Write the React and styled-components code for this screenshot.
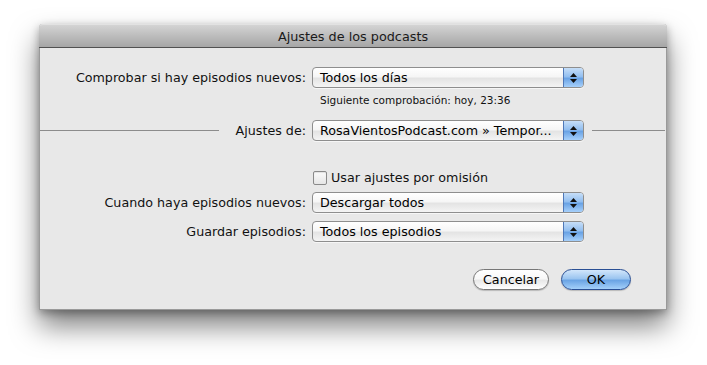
import React from "react";
import styled, { createGlobalStyle } from "styled-components";

const Global = createGlobalStyle`
  html, body { margin: 0; padding: 0; background: #ffffff; }
  body { font-family: "DejaVu Sans", "Liberation Sans", sans-serif; }
`;

const Page = styled.div`
  width: 707px;
  height: 365px;
  box-sizing: border-box;
  padding: 24px 0 0 39px;
  overflow: hidden;
`;

const Window = styled.div`
  width: 628px;
  height: 286px;
  box-sizing: border-box;
  background: #e8e8e8;
  border: 1px solid #9a9a9a;
  border-top: none;
  border-radius: 4px 4px 0 0;
  box-shadow: 0 16px 28px rgba(0, 0, 0, 0.5), 0 3px 8px rgba(0, 0, 0, 0.3);
  display: flex;
  flex-direction: column;
`;

const TitleBar = styled.div`
  height: 22px;
  border-radius: 4px 4px 0 0;
  background: linear-gradient(#d4d4d4 0%, #bcbcbc 50%, #a6a6a6 100%);
  border-top: 1px solid #e2e2e2;
  border-bottom: 1px solid #515151;
  display: flex;
  align-items: center;
  justify-content: center;
  font-size: 12.8px;
  color: #1a1a1a;
  margin: 0 -1px;
`;

const Body = styled.div`
  flex: 1;
  display: grid;
  grid-template-columns: 266px 272px 1fr;
  column-gap: 6px;
  align-content: start;
  padding-top: 19px;
`;

const Label = styled.div`
  font-size: 12.7px;
  color: #111;
  text-align: right;
  display: flex;
  align-items: center;
  justify-content: flex-end;
  white-space: nowrap;
  margin-top: ${(p) => p.$mt || 0}px;
`;

const LineLabel = styled(Label)`
  justify-content: stretch;
  gap: 17px;
`;

const Rule = styled.div`
  flex: 1;
  height: 1px;
  background: #8c8c8c;
`;

const RightRule = styled.div`
  display: flex;
  align-items: center;
  padding: 0 1px 0 2px;
  margin-top: ${(p) => p.$mt || 0}px;
`;

const Popup = styled.div`
  height: 21px;
  box-sizing: border-box;
  border: 1px solid #8e8e8e;
  border-radius: 4px;
  background: linear-gradient(#ffffff 0%, #f6f6f6 45%, #e4e4e4 55%, #f4f4f4 100%);
  display: flex;
  align-items: stretch;
  overflow: hidden;
  margin-top: ${(p) => p.$mt || 0}px;
  box-shadow: 0 1px 0 rgba(255, 255, 255, 0.6);
`;

const PopupText = styled.div`
  flex: 1;
  padding-left: 7px;
  font-size: 12.7px;
  color: #000;
  display: flex;
  align-items: center;
  white-space: nowrap;
`;

const Stepper = styled.div`
  width: 19px;
  border-left: 1px solid #4f78b8;
  background: linear-gradient(#c6def8 0%, #93bff0 45%, #6aa3e5 55%, #a6d0fb 100%);
  display: flex;
  flex-direction: column;
  align-items: center;
  justify-content: center;
  gap: 2px;
`;

const Empty = styled.div``;

const SubText = styled.div`
  font-size: 10.5px;
  color: #111;
  padding-left: 8px;
  margin-top: 6px;
  height: 13px;
  line-height: 13px;
`;

const CheckRow = styled.label`
  display: flex;
  align-items: center;
  gap: 4px;
  font-size: 12.7px;
  color: #111;
  margin-top: ${(p) => p.$mt || 0}px;
  padding-left: 1px;
  height: 15px;
`;

const Box = styled.span`
  width: 12px;
  height: 12px;
  border: 1px solid #8a8a8a;
  border-radius: 2px;
  background: linear-gradient(#fbfbfb, #e6e6e6);
  box-shadow: inset 0 1px 1px rgba(0, 0, 0, 0.1);
`;

const Buttons = styled.div`
  display: flex;
  justify-content: flex-end;
  gap: 12px;
  padding: 0 35px 0 0;
  margin-top: auto;
  margin-bottom: 19px;
`;

const Button = styled.div`
  height: 21px;
  box-sizing: border-box;
  width: ${(p) => p.$w}px;
  border-radius: 11px;
  font-size: 12.7px;
  display: flex;
  align-items: center;
  justify-content: center;
  color: #000;
  border: 1px solid ${(p) => (p.$primary ? "#2a4f94" : "#777")};
  background: ${(p) =>
    p.$primary
      ? "linear-gradient(#d2e6fb 0%, #9bc5f0 45%, #6ba4e4 55%, #a4d0fa 100%)"
      : "linear-gradient(#ffffff 0%, #f8f8f8 45%, #e8e8e8 55%, #ffffff 100%)"};
  box-shadow: 0 1px 1px rgba(0, 0, 0, 0.2);
`;

const Arrows = () => (
  <>
    <svg width="7" height="4" viewBox="0 0 7 4">
      <polygon points="3.5,0 7,4 0,4" fill="#111" />
    </svg>
    <svg width="7" height="4" viewBox="0 0 7 4">
      <polygon points="0,0 7,0 3.5,4" fill="#111" />
    </svg>
  </>
);

const Select = ({ value, mt }) => (
  <Popup $mt={mt}>
    <PopupText>{value}</PopupText>
    <Stepper>
      <Arrows />
    </Stepper>
  </Popup>
);

export default function App() {
  return (
    <Page>
      <Global />
      <Window>
        <TitleBar>Ajustes de los podcasts</TitleBar>
        <Body>
          <Label>Comprobar si hay episodios nuevos:</Label>
          <Select value="Todos los días" />
          <Empty />

          <Empty />
          <SubText>Siguiente comprobación: hoy, 23:36</SubText>
          <Empty />

          <LineLabel $mt={13}>
            <Rule />
            <span>Ajustes de:</span>
          </LineLabel>
          <Select value="RosaVientosPodcast.com » Tempor..." mt={13} />
          <RightRule $mt={13}>
            <Rule />
          </RightRule>

          <Empty />
          <CheckRow $mt={29}>
            <Box />
            <span>Usar ajustes por omisión</span>
          </CheckRow>
          <Empty />

          <Label $mt={7}>Cuando haya episodios nuevos:</Label>
          <Select value="Descargar todos" mt={7} />
          <Empty />

          <Label $mt={8}>Guardar episodios:</Label>
          <Select value="Todos los episodios" mt={8} />
          <Empty />
        </Body>
        <Buttons>
          <Button $w={76}>Cancelar</Button>
          <Button $w={70} $primary>
            OK
          </Button>
        </Buttons>
      </Window>
    </Page>
  );
}
